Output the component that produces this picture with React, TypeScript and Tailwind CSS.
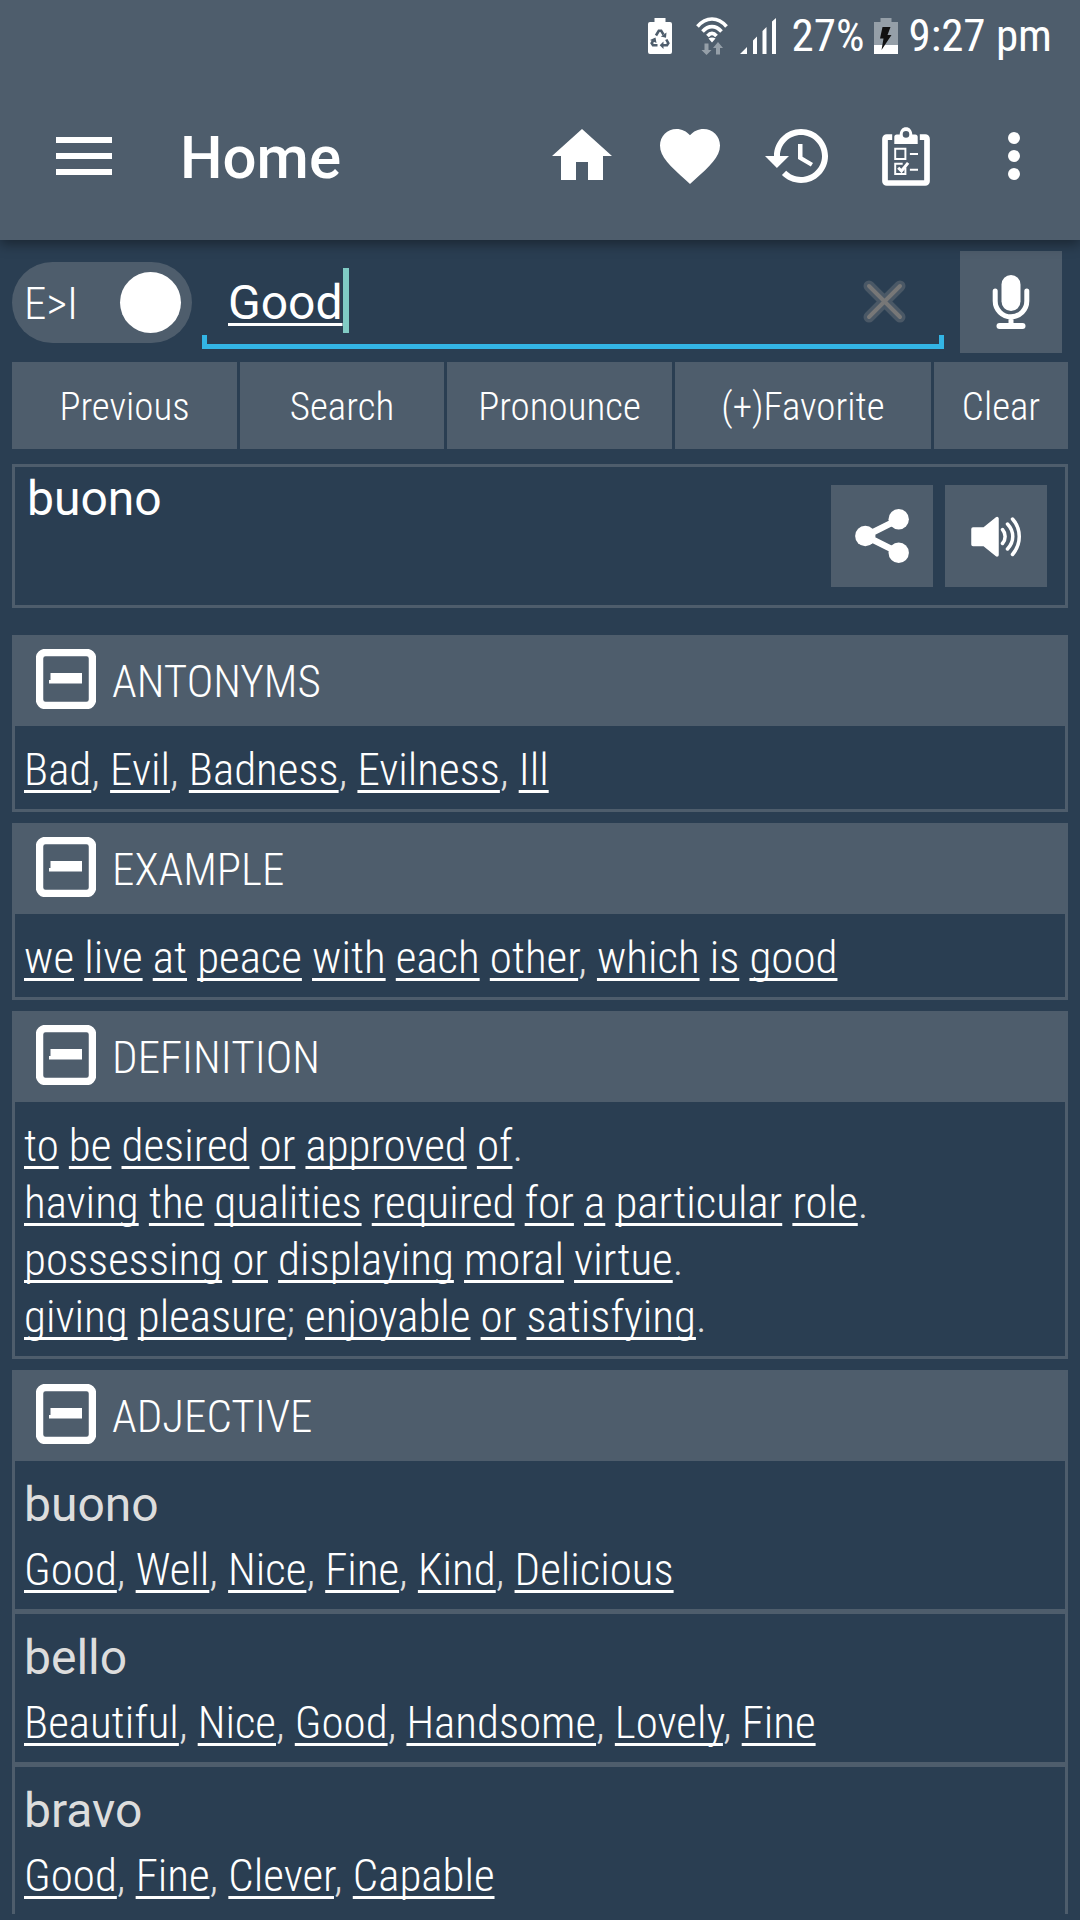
import { Fragment, type ReactNode } from 'react';

const sections = [
  { title: 'ANTONYMS', lines: ['Bad, Evil, Badness, Evilness, Ill'] },
  { title: 'EXAMPLE', lines: ['we live at peace with each other, which is good'] },
  {
    title: 'DEFINITION',
    lines: [
      'to be desired or approved of.',
      'having the qualities required for a particular role.',
      'possessing or displaying moral virtue.',
      'giving pleasure; enjoyable or satisfying.',
    ],
  },
];

const adjectives = [
  { word: 'buono', meanings: 'Good, Well, Nice, Fine, Kind, Delicious' },
  { word: 'bello', meanings: 'Beautiful, Nice, Good, Handsome, Lovely, Fine' },
  { word: 'bravo', meanings: 'Good, Fine, Clever, Capable' },
];

// every word is a link, punctuation and spaces stay plain
function LinkedText({ text }: { text: string }) {
  return (
    <p className="text-[45px] leading-[57px] font-light text-[#dddddd]">
      {text.split(/(\w+)/).map((part, i) =>
        /^\w+$/.test(part) ? (
          <a
            key={i}
            href={`#${part.toLowerCase()}`}
            className="text-white underline decoration-[3px] underline-offset-[5px] [text-decoration-skip-ink:none]"
          >
            {part}
          </a>
        ) : (
          <Fragment key={i}>{part}</Fragment>
        ),
      )}
    </p>
  );
}

function StatusBar() {
  return (
    <div className="flex h-[72px] items-center justify-end pr-7 text-[45px] leading-[72px]">
      <svg className="mr-6 h-9 w-6" viewBox="0 0 24 36" fill="#fff" aria-hidden="true">
        <path d="M6.500 0h11v4H22a2 2 0 0 1 2 2v28a2 2 0 0 1-2 2H2a2 2 0 0 1-2-2V6a2 2 0 0 1 2-2h4.500z" />
        <path
          d="M8 17.500l2.800-4.700h2.400l2.300 3.800M18.300 21.500l2 3.700-1.300 2h-4M9.500 27.200H5l-1.300-2 1.800-3.200"
          fill="none"
          stroke="#4e5d6c"
          strokeWidth="2.600"
        />
        <path d="M12.800 18.500l5.200 1.200 .5-5.200zM15.500 23.500v7.400l-3.800-3.700zM2 22l5.500-2.500 1 5.500z" fill="#4e5d6c" />
      </svg>
      <svg className="mr-3 h-[38px] w-8" viewBox="0 0 32 38" fill="none" stroke="#fff" strokeWidth="3.600" aria-hidden="true">
        <path d="M1.500 9.500C10-.5 22-.5 30.500 9.500M6.500 14.500c6-6.500 13-6.500 19 0M11.500 19c3-3.500 6-3.500 9 0" />
        <path d="M12.500 21.500c2-1.500 5-1.500 7 0L16 25.500z" fill="#fff" stroke="none" />
        <path d="M8.500 26.500h4V33h3L10.500 38l-5-5h3zM20 37.500h4V31h3l-5-6-5 6h3z" fill="#959fa8" stroke="none" />
      </svg>
      <svg className="mr-4 h-9 w-9" viewBox="0 0 36 36" fill="#fff" aria-hidden="true">
        <path d="M0 36l7-7v7zM13 22.500l4-4V36h-4zM22.500 13l4-4v27h-4zM32 3.500L36 0v36h-4z" />
      </svg>
      <span>27%</span>
      <svg className="mx-[10px] h-9 w-6" viewBox="0 0 24 36" aria-hidden="true">
        <path d="M6.500 0h11v4H24v32H0V4h6.500z" fill="#959fa8" />
        <path d="M0 27h24v9H0z" fill="#fff" />
        <path d="M8.500 9h8l-3 8h4L7.500 32l2-11.500H6z" fill="#111" />
      </svg>
      <span>9:27 pm</span>
    </div>
  );
}

function ToolbarButton({ label, children }: { label: string; children: ReactNode }) {
  return (
    <button type="button" aria-label={label} className="flex h-full w-[108px] items-center justify-center">
      <svg className="size-[72px]" viewBox="0 0 24 24" fill="#fff">
        {children}
      </svg>
    </button>
  );
}

function Toolbar() {
  return (
    <div className="flex h-[168px] items-center pr-3">
      <button type="button" aria-label="Menu" className="flex h-full w-[168px] items-center justify-center">
        <svg className="h-[38px] w-14" viewBox="0 0 56 38" fill="#fff">
          <path d="M0 0h56v6H0zM0 16h56v6H0zM0 32h56v6H0z" />
        </svg>
      </button>
      <h1 className="ml-3 flex-1 pt-1 font-['Roboto',sans-serif] text-[60px] leading-none font-medium">Home</h1>
      <ToolbarButton label="Home">
        <path d="M10 20v-6h4v6h5v-8h3L12 3 2 12h3v8z" />
      </ToolbarButton>
      <ToolbarButton label="Favorites">
        <path d="M12 21.350l-1.450-1.320C5.400 15.360 2 12.280 2 8.500 2 5.420 4.420 3 7.500 3c1.740 0 3.410.81 4.500 2.090C13.090 3.810 14.760 3 16.500 3 19.580 3 22 5.420 22 8.500c0 3.780-3.400 6.860-8.550 11.540L12 21.350z" />
      </ToolbarButton>
      <ToolbarButton label="History">
        <path d="M13 3c-4.970 0-9 4.030-9 9H1l3.890 3.890.07.14L9 12H6c0-3.870 3.130-7 7-7s7 3.130 7 7-3.130 7-7 7c-1.930 0-3.680-.79-4.940-2.060l-1.420 1.420C8.270 19.990 10.510 21 13 21c4.970 0 9-4.030 9-9s-4.030-9-9-9zm-1 5v5l4.280 2.540.72-1.210-3.500-2.080V8H12z" />
      </ToolbarButton>
      <ToolbarButton label="Quiz">
        <path
          d="M7.400 5.700H5.600a.6.6 0 0 0-.6.6v14.100a.6.6 0 0 0 .6.600h12.800a.6.6 0 0 0 .6-.6V6.300a.6.6 0 0 0-.6-.6h-1.800"
          fill="none"
          stroke="#fff"
          strokeWidth="1.900"
        />
        <path
          fillRule="evenodd"
          d="M8.100 8V5.600c0-.5.300-.8.800-.8h1C10 3.300 10.800 2.400 12 2.400s2 .9 2.100 2.400h1c.5 0 .8.300.8.800V8zM12 3.700a1.100 1.100 0 1 0 0 2.200 1.100 1.100 0 0 0 0-2.200z"
        />
        <path
          d="M8.400 9.600h3.400v3.400H8.400zM11.800 15.800v2.200H8.400v-3.400h2.500M13.300 11.300H16M13.300 16.600H16"
          fill="none"
          stroke="#fff"
          strokeWidth=".65"
        />
        <path d="M9.400 15.900l1.100 1.100 2.200-2.700" fill="none" stroke="#fff" strokeWidth="1" />
      </ToolbarButton>
      <ToolbarButton label="More options">
        <path d="M12 8a2 2 0 1 0 0-4 2 2 0 0 0 0 4zm0 6a2 2 0 1 0 0-4 2 2 0 0 0 0 4zm0 6a2 2 0 1 0 0-4 2 2 0 0 0 0 4z" />
      </ToolbarButton>
    </div>
  );
}

function SearchRow() {
  return (
    <div className="flex h-[102px] items-center pr-[6px]">
      <label className="flex h-[81px] w-[180px] items-center justify-between rounded-full bg-[#4e5d6c] pr-[11px] pl-3 text-[45px] font-light">
        <span className="pt-1">E&gt;I</span>
        <input type="checkbox" role="switch" defaultChecked className="size-[61px] appearance-none rounded-full bg-white" />
      </label>
      <div className="ml-[10px] flex flex-1 flex-col self-end pb-1">
        <div className="flex h-[67px] items-start pl-[26px] font-['Roboto',sans-serif] text-[48px]">
          <input
            type="text"
            aria-label="Word"
            defaultValue="Good"
            className="field-sizing-content h-[65px] pt-1 underline decoration-[3px] underline-offset-[4px] outline-none"
          />
          <span className="h-[65px] w-[6px] bg-[#80cbc4]" />
          <button type="button" aria-label="Clear text" className="mr-[38px] ml-auto flex h-[67px] items-center">
            <svg className="size-[43px]" viewBox="0 0 43 43" fill="none" strokeLinecap="round">
              <path d="M6 6l31 31M37 6L6 37" stroke="#4a5866" strokeWidth="11" />
              <path d="M6 6l31 31M37 6L6 37" stroke="#777777" strokeWidth="4" />
            </svg>
          </button>
        </div>
        <div className="h-[14px] border-x-[5px] border-b-[5px] border-[#33b5e5]" />
      </div>
      <button type="button" aria-label="Voice input" className="ml-4 flex size-[102px] items-center justify-center bg-[#4e5d6c]">
        <svg className="size-[54px]" viewBox="0 0 54 54" fill="none" stroke="#fff" strokeLinecap="round">
          <rect x="17.500" y="0" width="19" height="36" rx="9.500" fill="#fff" stroke="none" />
          <path d="M11.200 16v10a15.800 15.800 0 0 0 31.600 0V16M27 42v8" strokeWidth="5" />
          <path d="M15.500 51h23" strokeWidth="6" />
        </svg>
      </button>
    </div>
  );
}

function ActionBar() {
  const button = 'h-[87px] bg-[#4e5d6c] pt-1 text-center text-[39px] font-light';
  return (
    <div className="mt-[9px] grid grid-cols-[225fr_204fr_225fr_256fr_134fr] gap-[3px]">
      <button type="button" className={button}>Previous</button>
      <button type="button" className={button}>Search</button>
      <button type="button" className={button}>Pronounce</button>
      <button type="button" className={button}>(+)Favorite</button>
      <button type="button" className={button}>Clear</button>
    </div>
  );
}

function Translation() {
  return (
    <div className="mt-[15px] flex h-[144px] items-start gap-3 border-[3px] border-[#4e5d6c] pt-[18px] pr-[18px] pl-3">
      <p className="-mt-[15px] flex-1 font-['Roboto',sans-serif] text-[48px] leading-[57px]">buono</p>
      <button type="button" aria-label="Share" className="flex size-[102px] items-center justify-center bg-[#4e5d6c]">
        <svg className="size-[54px]" viewBox="0 0 54 54" fill="#fff">
          <path d="M43.700 10.300L10.300 27l33.400 16.700" fill="none" stroke="#fff" strokeWidth="6.500" />
          <circle cx="43.700" cy="10.300" r="10.200" />
          <circle cx="10.300" cy="27" r="10.200" />
          <circle cx="43.700" cy="43.700" r="10.200" />
        </svg>
      </button>
      <button type="button" aria-label="Listen" className="flex size-[102px] items-center justify-center bg-[#4e5d6c]">
        <svg className="size-[54px]" viewBox="0 0 54 54" fill="none" stroke="#fff" strokeWidth="3.500" strokeLinecap="round">
          <path d="M4 20h11L28 9.500v36.500L15 35.500H4z" fill="#fff" strokeLinejoin="round" />
          <path d="M33.500 20.500c3.500 4 3.500 10 0 14M38.500 15c7 7.500 7 17.500 0 25M43.500 10c9 10 9 25 0 35.500" />
        </svg>
      </button>
    </div>
  );
}

function Section({ title, children }: { title: string; children: ReactNode }) {
  return (
    <section className="border-[3px] border-t-0 border-[#4e5d6c]">
      <h2 className="bg-[#4e5d6c] font-light">
        <button type="button" aria-expanded="true" className="flex h-[91px] w-full items-center gap-4 pb-[3px] pl-[21px] text-[45px] leading-none">
          <svg className="size-[60px]" viewBox="0 0 60 60" fill="none" aria-hidden="true">
            <rect x="3.500" y="3.500" width="53" height="53" rx="6" stroke="#fff" strokeWidth="7.500" />
            <path d="M14.500 24H46v10.500H13V31h1.500z" fill="#fff" />
          </svg>
          <span className="pt-1">{title}</span>
        </button>
      </h2>
      {children}
    </section>
  );
}

export default function App() {
  return (
    <div className="flex h-screen flex-col bg-[#2a3e52] font-['Roboto_Condensed','Roboto',sans-serif] text-white">
      <header className="relative shrink-0 bg-[#4e5d6c] shadow-[0_4px_12px_rgba(0,0,0,0.4)]">
        <StatusBar />
        <Toolbar />
      </header>
      <main className="mb-[6px] flex-1 overflow-hidden px-3 pt-[11px]">
        <SearchRow />
        <ActionBar />
        <Translation />
        <div className="mt-[27px] flex flex-col gap-[11px]">
          {sections.map((s) => (
            <Section key={s.title} title={s.title}>
              <div className="px-[9px] pt-[15px] pb-[11px]">
                {s.lines.map((line) => (
                  <LinkedText key={line} text={line} />
                ))}
              </div>
            </Section>
          ))}
          <Section title="ADJECTIVE">
            <ul className="divide-y-5 divide-[#4e5d6c]">
              {adjectives.map((a) => (
                <li key={a.word} className="px-[9px] pt-[15px] pb-[11px]">
                  <p className="mb-2 font-['Roboto',sans-serif] text-[48px] leading-[57px] text-[#dddddd]">{a.word}</p>
                  <LinkedText text={a.meanings} />
                </li>
              ))}
            </ul>
          </Section>
        </div>
      </main>
    </div>
  );
}
